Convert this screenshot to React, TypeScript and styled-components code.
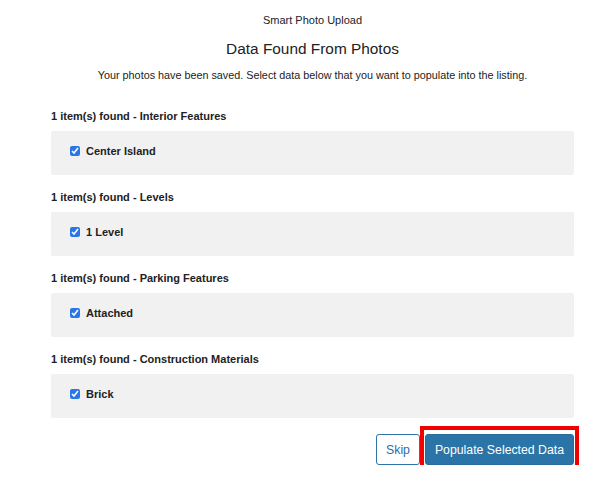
import React, { useState } from "react";
import styled, { createGlobalStyle } from "styled-components";

const GlobalStyle = createGlobalStyle`
  html, body {
    margin: 0;
    padding: 0;
    background: #fff;
  }
  body {
    font-family: "Liberation Sans", Arial, sans-serif;
    color: #222;
  }
`;

type Group = { category: string; items: string[] };

const groups: Group[] = [
  { category: "Interior Features", items: ["Center Island"] },
  { category: "Levels", items: ["1 Level"] },
  { category: "Parking Features", items: ["Attached"] },
  { category: "Construction Materials", items: ["Brick"] },
];

export default function App() {
  const [checked, setChecked] = useState<Record<string, boolean>>(() =>
    Object.fromEntries(groups.flatMap((g) => g.items.map((i) => [i, true])))
  );

  return (
    <>
      <GlobalStyle />
      <Page>
        <Header>
          <ModalLabel>Smart Photo Upload</ModalLabel>
          <Title>Data Found From Photos</Title>
          <Intro>
            Your photos have been saved. Select data below that you want to
            populate into the listing.
          </Intro>
        </Header>

        {groups.map((g) => (
          <Section key={g.category}>
            <SectionHeading>
              {g.items.length} item(s) found - {g.category}
            </SectionHeading>
            <Panel>
              {g.items.map((item) => (
                <CheckRow key={item}>
                  <Check
                    type="checkbox"
                    checked={!!checked[item]}
                    onChange={() =>
                      setChecked((prev) => ({ ...prev, [item]: !prev[item] }))
                    }
                  />
                  {item}
                </CheckRow>
              ))}
            </Panel>
          </Section>
        ))}

        <Actions>
          <SkipButton>Skip</SkipButton>
          <Highlight>
            <PrimaryButton>Populate Selected Data</PrimaryButton>
          </Highlight>
        </Actions>
      </Page>
    </>
  );
}

const Page = styled.div`
  width: 523px;
  margin-left: 51px;
  padding-top: 13px;
`;

const Header = styled.div`
  text-align: center;
  margin-bottom: 27px;
`;

const ModalLabel = styled.div`
  font-size: 11px;
  line-height: 14px;
`;

const Title = styled.h2`
  margin: 12px 0 0;
  font-size: 15.4px;
  font-weight: 400;
  line-height: 20px;
`;

const Intro = styled.p`
  margin: 9px 0 0;
  font-size: 10.8px;
  line-height: 14px;
`;

const Section = styled.div`
  margin-bottom: 15px;
`;

const SectionHeading = styled.div`
  font-size: 11px;
  font-weight: 700;
  line-height: 14px;
  margin-bottom: 8px;
`;

const Panel = styled.div`
  background: #f1f1f1;
  border-radius: 2px;
  height: 44px;
  box-sizing: border-box;
  padding: 13px 19px 0;
`;

const CheckRow = styled.label`
  display: flex;
  align-items: center;
  gap: 6px;
  font-size: 11px;
  font-weight: 700;
  line-height: 14px;
  cursor: pointer;
`;

const Check = styled.input`
  width: 10px;
  height: 10px;
  margin: 0;
  accent-color: #2a76e6;
`;

const Actions = styled.div`
  display: flex;
  justify-content: flex-end;
  align-items: flex-start;
  margin-top: 16px;
`;

const BaseButton = styled.button`
  height: 31px;
  box-sizing: border-box;
  font-family: "Liberation Sans", Arial, sans-serif;
  font-size: 12.3px;
  border-radius: 3px;
  cursor: pointer;
`;

const SkipButton = styled(BaseButton)`
  width: 44px;
  padding: 0;
  background: #fff;
  color: #2a6fa6;
  border: 1px solid #2e74a8;
`;

const Highlight = styled.div`
  position: relative;
  margin-left: 5px;
  &::after {
    content: "";
    position: absolute;
    top: -8px;
    left: -5px;
    right: -5px;
    bottom: -11px;
    border: 4px solid #f10000;
    pointer-events: none;
  }
`;

const PrimaryButton = styled(BaseButton)`
  width: 149px;
  padding: 0;
  background: #2b74a7;
  color: #fff;
  border: 1px solid #286c9c;
  display: block;
`;
